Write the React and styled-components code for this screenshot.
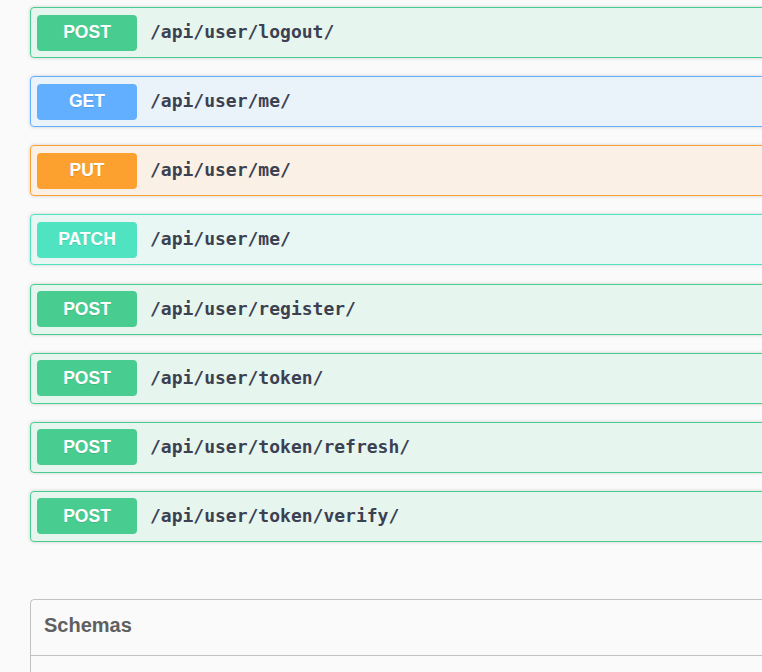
import React from 'react';
import styled, { createGlobalStyle } from 'styled-components';

const GlobalStyle = createGlobalStyle`
  html, body {
    margin: 0;
    padding: 0;
    background: #fafafa;
    overflow: hidden;
  }
`;

const METHODS = {
  POST: { color: '#49cc90', bg: 'rgba(73, 204, 144, 0.1)' },
  GET: { color: '#61affe', bg: 'rgba(97, 175, 254, 0.1)' },
  PUT: { color: '#fca130', bg: 'rgba(252, 161, 48, 0.1)' },
  PATCH: { color: '#50e3c2', bg: 'rgba(80, 227, 194, 0.1)' },
};

const Wrapper = styled.div`
  width: 900px;
  padding: 7px 0 0 30px;
  font-family: "Liberation Sans", Arial, sans-serif;
`;

const OpList = styled.div`
  display: flex;
  flex-direction: column;
  gap: 18.15px;
`;

const OpBlock = styled.div`
  display: flex;
  align-items: center;
  height: 49px;
  padding: 0 6px;
  border: 1px solid ${p => p.$color};
  border-radius: 4px;
  background: ${p => p.$bg};
  box-shadow: 0 0 3.75px rgba(0, 0, 0, 0.19);
`;

const Method = styled.span`
  display: flex;
  align-items: center;
  justify-content: center;
  width: 100px;
  height: 36px;
  border-radius: 4px;
  background: ${p => p.$color};
  color: #fff;
  font-size: 17.5px;
  font-weight: 700;
  text-shadow: 0 1px 0 rgba(0, 0, 0, 0.1);
`;

const Path = styled.span`
  padding: 0 0 2px 13px;
  color: #3b4151;
  font-family: "DejaVu Sans Mono", "Liberation Mono", monospace;
  font-size: 18px;
  font-weight: 700;
`;

const Models = styled.section`
  margin-top: 57px;
  border: 1px solid rgba(59, 65, 81, 0.3);
  border-radius: 4px;
  height: 120px;
`;

const ModelsHeader = styled.h4`
  margin: 0;
  height: 52px;
  padding: 0 13px 3px;
  display: flex;
  align-items: center;
  border-bottom: 1px solid rgba(59, 65, 81, 0.3);
  color: #606060;
  font-size: 20px;
  font-weight: 700;
`;

const ops = [
  ['POST', '/api/user/logout/'],
  ['GET', '/api/user/me/'],
  ['PUT', '/api/user/me/'],
  ['PATCH', '/api/user/me/'],
  ['POST', '/api/user/register/'],
  ['POST', '/api/user/token/'],
  ['POST', '/api/user/token/refresh/'],
  ['POST', '/api/user/token/verify/'],
];

export default function App() {
  return (
    <>
      <GlobalStyle />
      <Wrapper>
        <OpList>
          {ops.map(([method, path], i) => {
            const m = METHODS[method];
            return (
              <OpBlock key={i} $color={m.color} $bg={m.bg}>
                <Method $color={m.color}>{method}</Method>
                <Path>{path}</Path>
              </OpBlock>
            );
          })}
        </OpList>
        <Models>
          <ModelsHeader>Schemas</ModelsHeader>
        </Models>
      </Wrapper>
    </>
  );
}
